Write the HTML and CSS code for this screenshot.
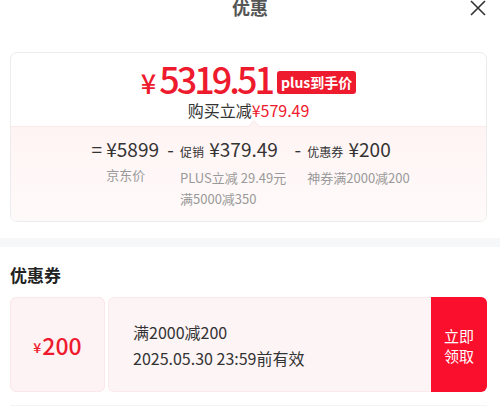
FILE: index.html
```html
<!DOCTYPE html>
<html lang="zh">
<head>
<meta charset="utf-8">
<link rel="stylesheet" href="styles.css">
</head>
<body>
<div class="sheet">
  <header class="head">
    <div class="title">优惠</div>
    <svg class="close" width="16" height="16" viewBox="0 0 16 16"><path d="M1 1 L15 15 M15 1 L1 15" stroke="#333" stroke-width="1.6" fill="none"/></svg>
  </header>

  <section class="card">
    <div class="top">
      <div class="price-row">
        <span class="price"><span class="yen">¥</span>5319.51</span>
        <span class="badge">plus到手价</span>
      </div>
      <div class="save">购买立减<span class="red">¥579.49</span></div>
    </div>
    <div class="calc">
      <span class="notch"></span>
      <div class="terms">
        <div class="term">
          <span class="op">=</span>
          <div class="block">
            <div class="amt">¥5899</div>
            <div class="lbl">京东价</div>
          </div>
        </div>
        <div class="term">
          <span class="op">-</span>
          <div class="block">
            <div class="amt"><span class="tag">促销</span> ¥379.49</div>
            <div class="lbl">PLUS立减 29.49元</div>
            <div class="lbl">满5000减350</div>
          </div>
        </div>
        <div class="term">
          <span class="op">-</span>
          <div class="block">
            <div class="amt"><span class="tag">优惠券</span> ¥200</div>
            <div class="lbl">神券满2000减200</div>
          </div>
        </div>
      </div>
    </div>
  </section>

  <div class="band"></div>

  <h2 class="sec-title">优惠券</h2>

  <div class="coupon">
    <div class="c-left"><span class="c-yen">¥</span>200</div>
    <div class="c-mid">
      <div class="c-name">满2000减200</div>
      <div class="c-date">2025.05.30 23:59前有效</div>
    </div>
    <div class="c-btn">立即<br>领取</div>
  </div>
  <div class="next"></div>
</div>
</body>
</html>
```

FILE: styles.css
```css
* { box-sizing: border-box; }
html, body { margin: 0; padding: 0; background: #fff; }
body {
  font-family: "Noto Sans CJK SC", "Noto Sans", sans-serif;
  color: #333;
  width: 500px;
  height: 408px;
  overflow: hidden;
}
.sheet { padding: 0 13px 0 10px; }
.head {
  height: 56px;
  display: flex;
  justify-content: center;
  align-items: flex-start;
  position: relative;
  margin-top: -4px;
}
.title {
  font-size: 18px;
  font-weight: 700;
  line-height: 22px;
  color: #555;
  margin-left: 3px;
}
.close {
  position: absolute;
  right: 1px;
  top: 4px;
}
.card {
  border: 1px solid #ececec;
  border-radius: 7px;
  overflow: hidden;
}
.top {
  padding: 8px 0 5px;
  display: flex;
  flex-direction: column;
  align-items: center;
}
.price-row { display: flex; align-items: center; gap: 5px; height: 38px; }
.price {
  color: #ee1a2e;
  font-size: 36px;
  font-weight: 500;
  letter-spacing: -3px;
  line-height: 38px;
}
.yen { font-size: 27px; margin-right: 3px; letter-spacing: 0; }
.badge {
  background: #ee1a2e;
  color: #fff;
  font-size: 14px;
  font-weight: 700;
  line-height: 23px;
  padding: 0 4px;
  border-radius: 3px;
  margin-top: 4px;
}
.save { font-size: 16px; line-height: 22px; color: #333; }
.red { color: #ee1a2e; }
.calc {
  position: relative;
  background: linear-gradient(#fff4f4, #fffafa);
  border-top: 1px solid #fbeaea;
  padding: 9px 0 12px;
}
.notch {
  position: absolute;
  left: 239px;
  top: -5px;
  width: 8px;
  height: 8px;
  background: #fff4f4;
  border-left: 1px solid #fbeaea;
  border-top: 1px solid #fbeaea;
  transform: rotate(45deg);
}
.terms { display: flex; justify-content: center; gap: 6px; padding-left: 4px; }
.term { display: flex; gap: 4px; }
.op { font-size: 19px; line-height: 26px; color: #333; width: 11px; text-align: center; }
.amt { font-size: 19px; line-height: 26px; color: #333; white-space: nowrap; }
.tag { font-size: 12px; margin-right: 1px; }
.lbl { font-size: 13px; line-height: 20px; color: #999; white-space: nowrap; margin-top: 3px; }
.lbl + .lbl { margin-top: 1px; }
.band {
  height: 9px;
  background: #f6f7f9;
  margin: 16px -13px 0 -10px;
}
.sec-title {
  font-size: 17px;
  font-weight: 700;
  color: #222;
  margin: 0;
  padding: 16px 0 0;
  line-height: 24px;
}
.coupon {
  display: flex;
  height: 95px;
  margin-top: 10px;
}
.c-left {
  width: 95px;
  background: #fdf2f4;
  border: 1px solid #fbe6ea;
  border-radius: 6px;
  color: #ee1a2e;
  font-size: 23px;
  font-weight: 500;
  display: flex;
  align-items: center;
  justify-content: center;
}
.c-yen { font-size: 14px; margin-right: 1px; margin-top: 4px; }
.c-mid {
  flex: 1;
  margin-left: 3px;
  background: #fdf4f6;
  border: 1px solid #fbe9ec;
  border-right: 0;
  border-radius: 6px 0 0 6px;
  padding: 21px 0 0 24px;
  font-size: 16px;
  line-height: 26px;
  color: #333;
}
.c-btn {
  width: 56px;
  background: #fa0f2d;
  color: #fff;
  font-size: 15px;
  line-height: 20px;
  border-radius: 0 6px 6px 0;
  display: flex;
  align-items: center;
  justify-content: center;
  text-align: center;
  padding-top: 2px;
}
.next { height: 1px; background: #f4f4f4; margin-top: 13px; }
```
